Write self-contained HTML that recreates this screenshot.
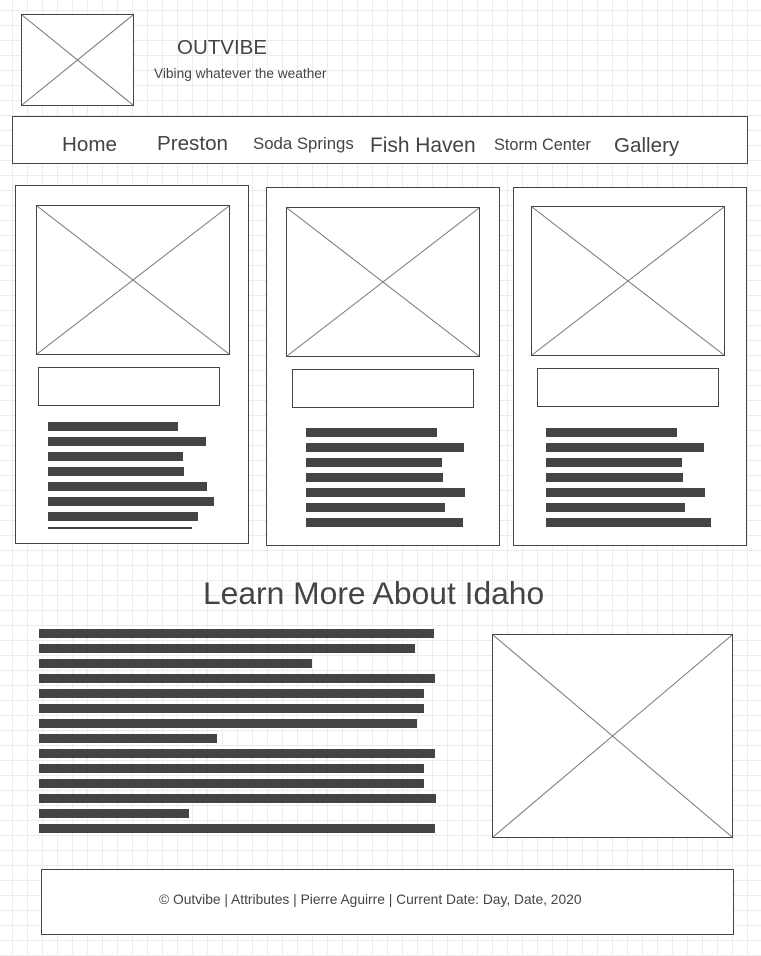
<!DOCTYPE html>
<html><head><meta charset="utf-8"><style>
html,body{margin:0;padding:0}
body{width:761px;height:956px;position:relative;overflow:hidden;background-color:#fff;
background-image:linear-gradient(#ececec 1px,transparent 1px),linear-gradient(90deg,#ececec 1px,transparent 1px);
background-size:15px 15px;background-position:12px 10px;font-family:"Liberation Sans",sans-serif;color:#444}
svg{position:absolute;left:0;top:0}
.t{position:absolute;white-space:nowrap;color:#444}
</style></head><body>
<svg width="761" height="956" viewBox="0 0 761 956">
<g fill="#fff" stroke="#444" stroke-width="1">
<rect x="21.5" y="14.5" width="112" height="91"/>
<rect x="12.5" y="116.5" width="735" height="47"/>
<rect x="15.5" y="185.5" width="233" height="358"/>
<rect x="266.5" y="187.5" width="233" height="358"/>
<rect x="513.5" y="187.5" width="233" height="358"/>
<rect x="36.5" y="205.5" width="193" height="149"/>
<rect x="286.5" y="207.5" width="193" height="149"/>
<rect x="531.5" y="206.5" width="193" height="149"/>
<rect x="38.5" y="367.5" width="181" height="38"/>
<rect x="292.5" y="369.5" width="181" height="38"/>
<rect x="537.5" y="368.5" width="181" height="38"/>
<rect x="492.5" y="634.5" width="240" height="203"/>
<rect x="41.5" y="869.5" width="692" height="65"/>
</g>
<g stroke="#777" stroke-width="1">
<path d="M22 15L133 105M133 15L22 105"/>
<path d="M37 206L229 354M229 206L37 354"/>
<path d="M287 208L479 356M479 208L287 356"/>
<path d="M532 207L724 355M724 207L532 355"/>
<path d="M493 635L732 837M732 635L493 837"/>
</g>
<g fill="#444">
<rect x="48" y="422" width="130" height="9"/><rect x="48" y="437" width="158" height="9"/>
<rect x="48" y="452" width="135" height="9"/><rect x="48" y="467" width="136" height="9"/>
<rect x="48" y="482" width="159" height="9"/><rect x="48" y="497" width="166" height="9"/>
<rect x="48" y="512" width="150" height="9"/><rect x="48" y="527" width="144" height="2"/>
<rect x="306" y="428" width="131" height="9"/><rect x="306" y="443" width="158" height="9"/>
<rect x="306" y="458" width="136" height="9"/><rect x="306" y="473" width="137" height="9"/>
<rect x="306" y="488" width="159" height="9"/><rect x="306" y="503" width="139" height="9"/>
<rect x="306" y="518" width="157" height="9"/>
<rect x="546" y="428" width="131" height="9"/><rect x="546" y="443" width="158" height="9"/>
<rect x="546" y="458" width="136" height="9"/><rect x="546" y="473" width="137" height="9"/>
<rect x="546" y="488" width="159" height="9"/><rect x="546" y="503" width="139" height="9"/>
<rect x="546" y="518" width="165" height="9"/>
<rect x="39" y="629" width="395" height="9"/><rect x="39" y="644" width="376" height="9"/>
<rect x="39" y="659" width="273" height="9"/><rect x="39" y="674" width="396" height="9"/>
<rect x="39" y="689" width="385" height="9"/><rect x="39" y="704" width="385" height="9"/>
<rect x="39" y="719" width="378" height="9"/><rect x="39" y="734" width="178" height="9"/>
<rect x="39" y="749" width="396" height="9"/><rect x="39" y="764" width="385" height="9"/>
<rect x="39" y="779" width="385" height="9"/><rect x="39" y="794" width="397" height="9"/>
<rect x="39" y="809" width="150" height="9"/><rect x="39" y="824" width="396" height="9"/>
</g>
</svg>
<div class="t" style="left:177px;top:36px;font-size:20.5px">OUTVIBE</div>
<div class="t" style="left:154px;top:66px;font-size:13.7px">Vibing whatever the weather</div>
<div class="t" style="left:62px;top:133px;font-size:20.6px">Home</div>
<div class="t" style="left:157px;top:132px;font-size:20.6px">Preston</div>
<div class="t" style="left:253px;top:134px;font-size:16.8px">Soda Springs</div>
<div class="t" style="left:370px;top:134px;font-size:20.9px">Fish Haven</div>
<div class="t" style="left:494px;top:136px;font-size:16.3px">Storm Center</div>
<div class="t" style="left:614px;top:134px;font-size:20.6px">Gallery</div>
<div class="t" style="left:203px;top:575px;font-size:31.8px">Learn More About Idaho</div>
<div class="t" style="left:159px;top:892px;font-size:13.8px">© Outvibe | Attributes | Pierre Aguirre | Current Date: Day, Date, 2020</div>
</body></html>
